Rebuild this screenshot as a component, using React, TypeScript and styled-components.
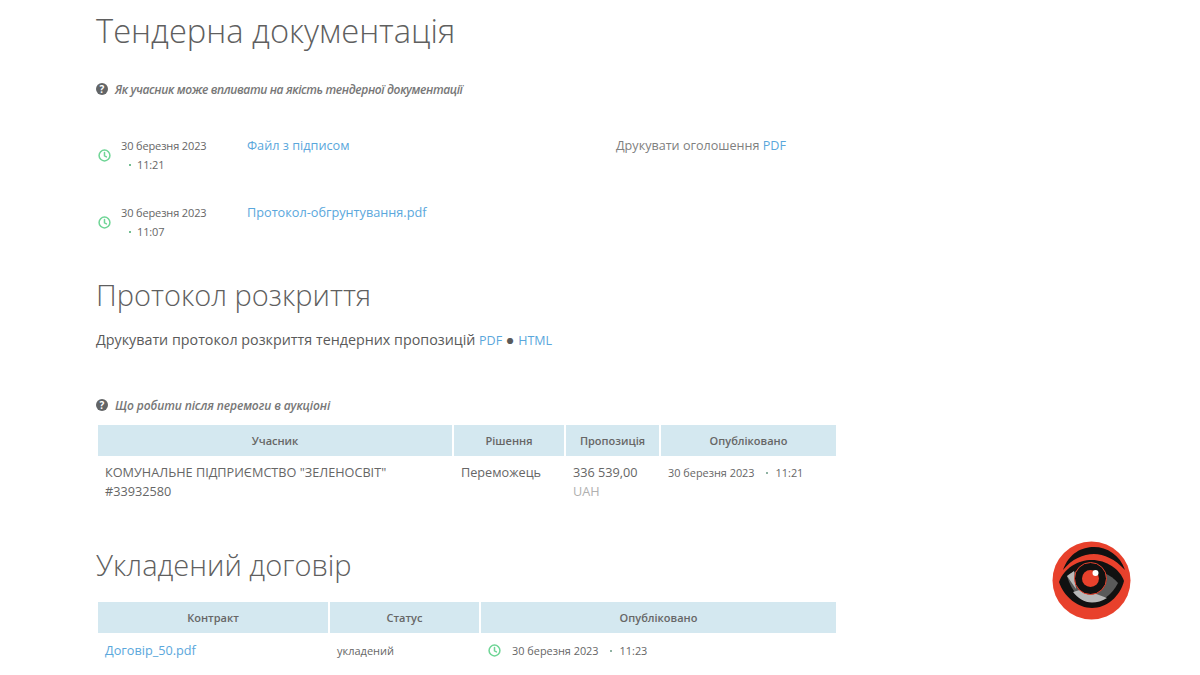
import React from "react";
import styled, { createGlobalStyle } from "styled-components";

const Global = createGlobalStyle`
  html, body { margin: 0; padding: 0; background: #fff; }
  body { font-family: "Open Sans", "Noto Sans", sans-serif; color: #555; overflow: hidden; }
  a { color: #4a9fd6; text-decoration: none; }
`;

const Page = styled.div`
  position: relative;
  width: 1200px;
  height: 675px;
  overflow: hidden;
  box-sizing: border-box;
  padding: 11px 0 0 96px;
`;
const Content = styled.main`
  width: 742px;
  display: flex;
  flex-direction: column;
`;
const Title = styled.h2<{ $top?: number; $bottom?: number; $size: number }>`
  margin: ${(p) => p.$top ?? 0}px 0 ${(p) => p.$bottom ?? 0}px;
  font-size: ${(p) => p.$size}px;
  line-height: 40px;
  font-weight: 300;
  color: #5f5f5f;
  white-space: nowrap;
`;
const Hint = styled.div<{ $top: number; $tracking: number }>`
  margin-top: ${(p) => p.$top}px;
  display: flex;
  align-items: center;
  gap: 7px;
  height: 18px;
  font-size: 12px;
  font-style: italic;
  font-weight: 600;
  letter-spacing: ${(p) => p.$tracking}px;
  color: #777;
  white-space: nowrap;
`;
const HelpDot = styled.span`
  width: 12px;
  height: 12px;
  border-radius: 50%;
  background: #626567;
  color: #fff;
  font-size: 10px;
  line-height: 12px;
  font-weight: 700;
  font-style: normal;
  letter-spacing: 0;
  text-align: center;
  flex: none;
`;
const DocList = styled.div`
  margin-top: 38px;
  display: flex;
  flex-direction: column;
  gap: 29px;
`;
const DocRow = styled.div`
  display: grid;
  grid-template-columns: 25px 126px 369px auto;
  align-items: start;
  height: 38px;
`;
const ClockCell = styled.span`
  display: flex;
  align-items: center;
  height: 38px;
  padding-left: 2px;
  color: #6fd596;
`;
const DateStack = styled.div`
  font-size: 11px;
  line-height: 19px;
  letter-spacing: -0.13px;
  color: #666;
  white-space: nowrap;
`;
const TimeLine = styled.div`
  padding-left: 8px;
  display: flex;
  align-items: center;
  gap: 6px;
`;
const Bullet = styled.span`
  width: 2px;
  height: 2px;
  border-radius: 50%;
  background: #44a86c;
  flex: none;
  margin-top: 1px;
`;
const DocLink = styled.a`
  font-size: 12.7px;
  line-height: 19px;
  white-space: nowrap;
  color: #5aa7dc;
`;
const PrintLine = styled.div`
  font-size: 12.6px;
  line-height: 19px;
  color: #808080;
  white-space: nowrap;
  a { color: #5aa7dc; }
`;
const ProtocolLine = styled.div`
  margin-top: 15px;
  font-size: 14.3px;
  line-height: 20px;
  color: #5a5a5a;
  white-space: nowrap;
  a { font-size: 12.5px; color: #5aa7dc; }
`;
const Table = styled.table<{ $top: number }>`
  margin: ${(p) => p.$top}px 0 0 0;
  width: 742px;
  table-layout: fixed;
  border-collapse: separate;
  border-spacing: 2px;
`;
const HeadCell = styled.th`
  height: 31px;
  padding: 0;
  background: #d4e8f0;
  font-size: 11px;
  font-weight: 600;
  color: #666;
  text-align: center;
`;
const BodyCell = styled.td<{ $size?: number; $pad?: number }>`
  padding: ${(p) => p.$pad ?? 5}px 7px;
  vertical-align: top;
  font-size: ${(p) => p.$size ?? 12.7}px;
  line-height: 19px;
  color: #666;
  a { color: #5aa7dc; }
`;
const Muted = styled.div`
  color: #b0b0b0;
`;
const Inline = styled.div`
  display: flex;
  align-items: center;
  font-size: 10.9px;
  line-height: 19px;
  white-space: nowrap;
`;
const GapBullet = styled(Bullet)`
  margin: 1px 8px 0 11px;
  background: #6a9a84;
`;
const SmallClock = styled.span`
  display: flex;
  color: #6fd596;
  margin-right: 11px;
`;
const Logo = styled.svg`
  position: absolute;
  left: 1052px;
  top: 541px;
`;

const Clock = () => (
  <svg width="13" height="13" viewBox="0 0 24 24" fill="none" stroke="currentColor" strokeWidth="2.8" strokeLinecap="round">
    <circle cx="12" cy="12" r="10" />
    <path d="M12 6.5V12.5L15.5 14.5" />
  </svg>
);

const Docs = [
  { date: "30 березня 2023", time: "11:21", name: "Файл з підписом", print: true },
  { date: "30 березня 2023", time: "11:07", name: "Протокол-обгрунтування.pdf", print: false },
];

export default function App() {
  return (
    <Page>
      <Global />
      <Content>
        <Title $size={32.7}>Тендерна документація</Title>
        <Hint $top={29} $tracking={-0.37}>
          <HelpDot>?</HelpDot>
          Як учасник може впливати на якість тендерної документації
        </Hint>
        <DocList>
          {Docs.map((d) => (
            <DocRow key={d.time}>
              <ClockCell><Clock /></ClockCell>
              <DateStack>
                {d.date}
                <TimeLine><Bullet />{d.time}</TimeLine>
              </DateStack>
              <DocLink href="#">{d.name}</DocLink>
              {d.print && <PrintLine>Друкувати оголошення <a href="#">PDF</a></PrintLine>}
            </DocRow>
          ))}
        </DocList>
        <Title $size={29} $top={34}>Протокол розкриття</Title>
        <ProtocolLine>
          Друкувати протокол розкриття тендерних пропозицій <a href="#">PDF</a> ● <a href="#">HTML</a>
        </ProtocolLine>
        <Hint $top={45} $tracking={-0.1}>
          <HelpDot>?</HelpDot>
          Що робити після перемоги в аукціоні
        </Hint>
        <Table $top={9}>
          <colgroup>
            <col style={{ width: 354 }} />
            <col style={{ width: 110 }} />
            <col style={{ width: 93 }} />
            <col />
          </colgroup>
          <thead>
            <tr>
              <HeadCell>Учасник</HeadCell>
              <HeadCell>Рішення</HeadCell>
              <HeadCell>Пропозиція</HeadCell>
              <HeadCell>Опубліковано</HeadCell>
            </tr>
          </thead>
          <tbody>
            <tr>
              <BodyCell>КОМУНАЛЬНЕ ПІДПРИЄМСТВО "ЗЕЛЕНОСВІТ"<br />#33932580</BodyCell>
              <BodyCell>Переможець</BodyCell>
              <BodyCell>336 539,00<Muted>UAH</Muted></BodyCell>
              <BodyCell>
                <Inline>30 березня 2023<GapBullet />11:21</Inline>
              </BodyCell>
            </tr>
          </tbody>
        </Table>
        <Title $size={29} $top={37}>Укладений договір</Title>
        <Table $top={15}>
          <colgroup>
            <col style={{ width: 230 }} />
            <col style={{ width: 149 }} />
            <col />
          </colgroup>
          <thead>
            <tr>
              <HeadCell>Контракт</HeadCell>
              <HeadCell>Статус</HeadCell>
              <HeadCell>Опубліковано</HeadCell>
            </tr>
          </thead>
          <tbody>
            <tr>
              <BodyCell $pad={6}><a href="#">Договір_50.pdf</a></BodyCell>
              <BodyCell $pad={6} $size={11}>укладений</BodyCell>
              <BodyCell $pad={6}>
                <Inline>
                  <SmallClock><Clock /></SmallClock>
                  30 березня 2023<GapBullet />11:23
                </Inline>
              </BodyCell>
            </tr>
          </tbody>
        </Table>
      </Content>
      <Logo width="79" height="79" viewBox="0 0 79 79">
        <circle cx="39.5" cy="39.5" r="39" fill="#e8412c" />
        <path d="M11 29 C17 12 30 6 42 6 C55 6 68 14 73 29 C63 18 52 13 42 13 C31 13 20 18 11 29Z" fill="#111" />
        <path d="M7 41 C12 27 26 19 40 19 C54 19 68 28 72 40 C68 56 54 67 40 67 C26 67 12 56 7 41Z" fill="#111" />
        <path d="M15 35 C24 26 54 26 66 42 C60 54 50 61 40 61 C30 61 20 52 15 35Z" fill="#5a5a5a" />
        <path d="M15 35 L22 30 L24 48 Z M21 51 L31 48 L55 57 C50 60 45 61.500 40 61.500 C32 61.500 26 57 21 51Z" fill="#b8b8b8" />
        <circle cx="38.500" cy="37.500" r="16" fill="#111" stroke="#e8412c" strokeWidth="1" />
        <circle cx="38.500" cy="37.500" r="8.500" fill="#e8412c" />
        <circle cx="43.500" cy="32" r="3" fill="#fff" />
      </Logo>
    </Page>
  );
}
